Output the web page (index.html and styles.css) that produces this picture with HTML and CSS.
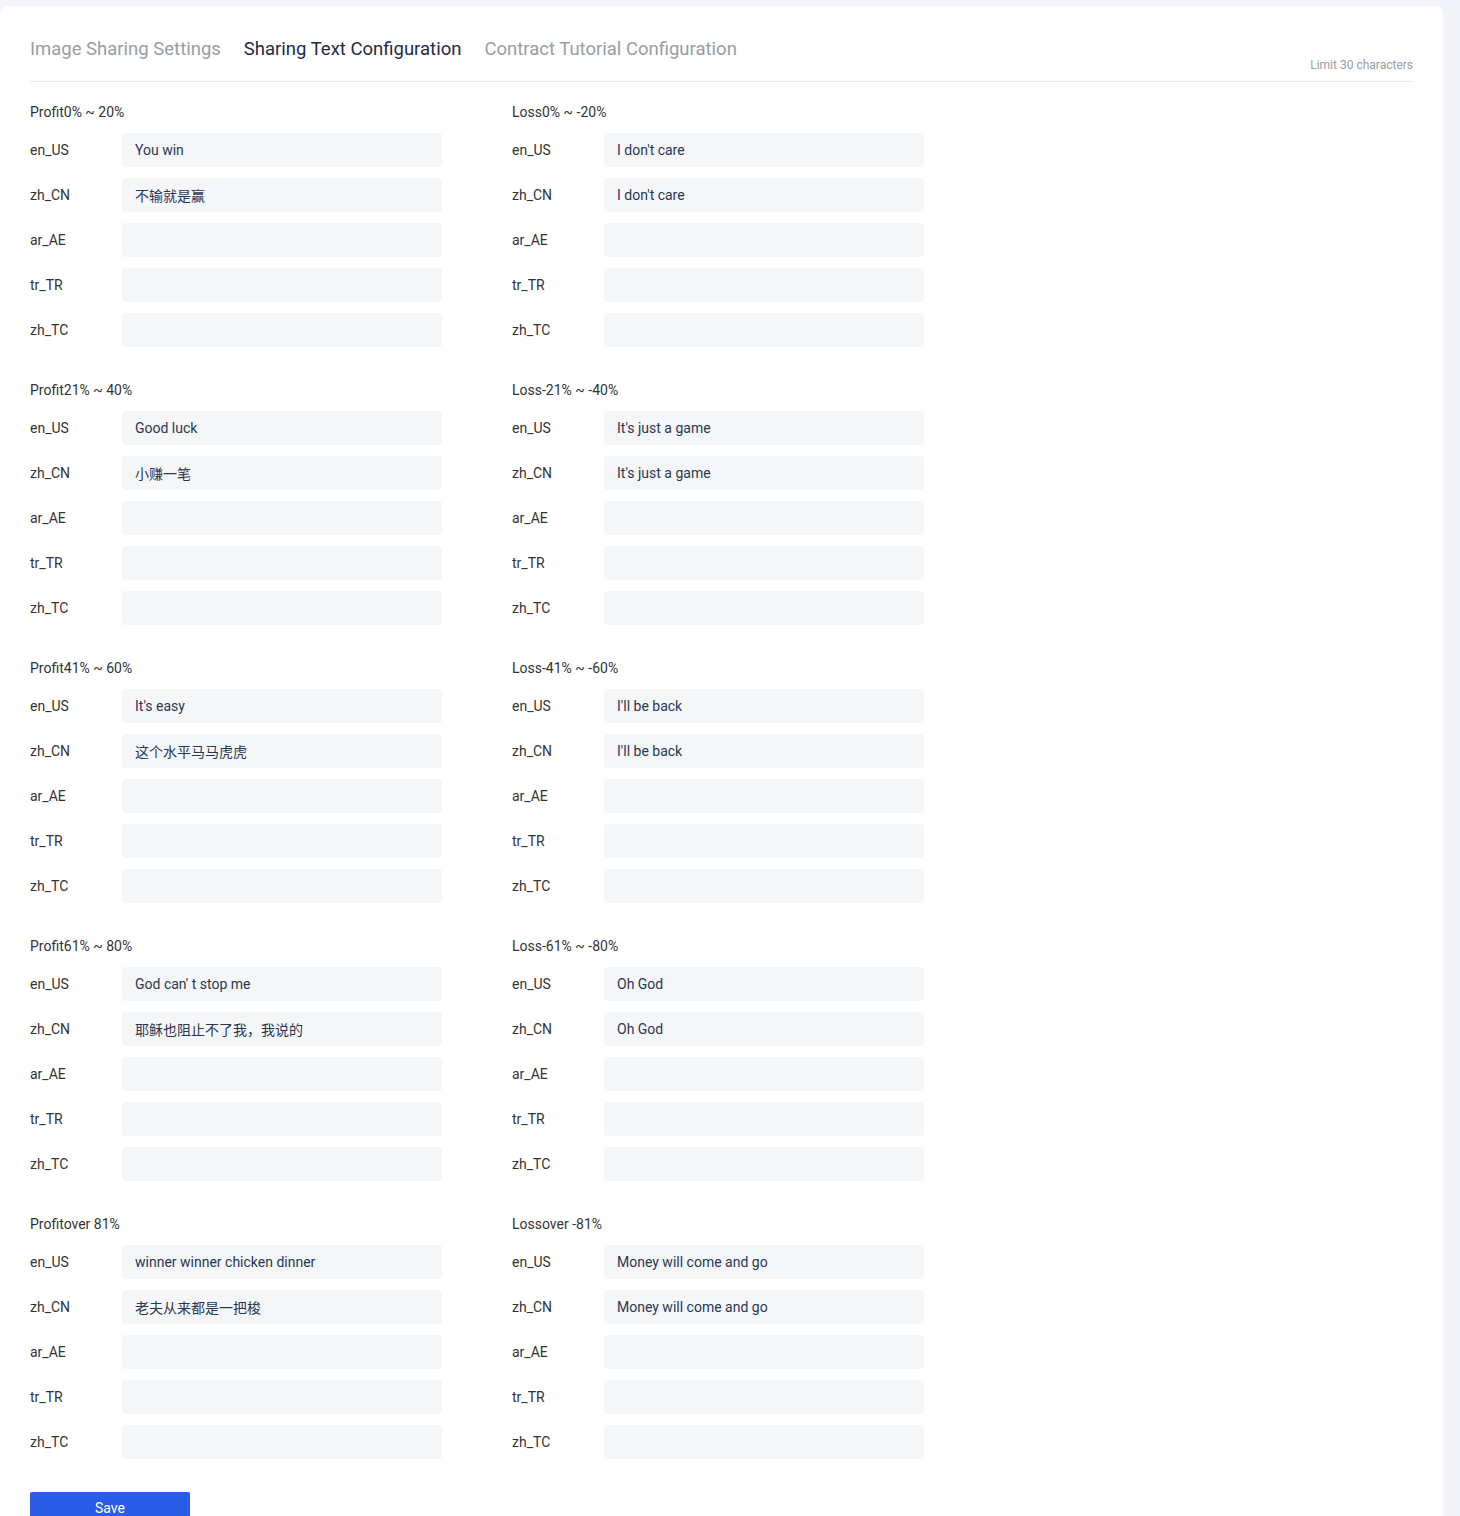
FILE: index.html
```html
<!DOCTYPE html>
<html lang="en">
<head>
<meta charset="utf-8">
<title>Sharing Text Configuration</title>
<link rel="stylesheet" href="styles.css">
</head>
<body>
<div class="card">
  <div class="tabbar">
    <div class="tabs">
      <span class="tab">Image Sharing Settings</span>
      <span class="tab active">Sharing Text Configuration</span>
      <span class="tab">Contract Tutorial Configuration</span>
    </div>
    <span class="limit">Limit 30 characters</span>
  </div>
  <div class="grid" id="grid"></div>
  <button class="save">Save</button>
</div>
<script src="app.js"></script>
</body>
</html>
```
FILE: app.js
```js
var data = [
  ["Profit0% ~ 20%", ["You win", "不输就是赢"], "Loss0% ~ -20%", ["I don't care", "I don't care"]],
  ["Profit21% ~ 40%", ["Good luck", "小赚一笔"], "Loss-21% ~ -40%", ["It's just a game", "It's just a game"]],
  ["Profit41% ~ 60%", ["It's easy", "这个水平马马虎虎"], "Loss-41% ~ -60%", ["I'll be back", "I'll be back"]],
  ["Profit61% ~ 80%", ["God can' t stop me", "耶稣也阻止不了我，我说的"], "Loss-61% ~ -80%", ["Oh God", "Oh God"]],
  ["Profitover 81%", ["winner winner chicken dinner", "老夫从来都是一把梭"], "Lossover -81%", ["Money will come and go", "Money will come and go"]]
];
var langs = ["en_US", "zh_CN", "ar_AE", "tr_TR", "zh_TC"];
var grid = document.getElementById("grid");
function section(title, vals) {
  var s = document.createElement("div");
  s.className = "section";
  var h = document.createElement("div");
  h.className = "sec-title";
  h.textContent = title;
  s.appendChild(h);
  langs.forEach(function (l, i) {
    var r = document.createElement("div");
    r.className = "row";
    var lab = document.createElement("label");
    lab.className = "lang";
    lab.textContent = l;
    var inp = document.createElement("input");
    inp.className = "field";
    inp.type = "text";
    inp.value = vals[i] || "";
    r.appendChild(lab);
    r.appendChild(inp);
    s.appendChild(r);
  });
  return s;
}
data.forEach(function (d) {
  grid.appendChild(section(d[0], d[1]));
  grid.appendChild(section(d[2], d[3]));
});
```
FILE: styles.css
```css
* { box-sizing: border-box; }
html, body { margin: 0; padding: 0; }
body {
  background: #f3f5fa;
  font-family: Roboto, "Noto Sans CJK SC", sans-serif;
  color: #333;
}
.card {
  margin-top: 6px;
  width: 1443px;
  min-height: 1600px;
  background: #fff;
  border-radius: 8px;
  padding: 31px 30px 0 30px;
}
.tabbar {
  display: flex;
  justify-content: space-between;
  align-items: flex-end;
  border-bottom: 1px solid #e8e9ec;
  width: 1383px;
}
.tabs {
  display: flex;
  gap: 23px;
  padding-bottom: 20px;
}
.tab {
  font-size: 18.5px;
  line-height: 24px;
  color: #9a9da4;
}
.tab.active { color: #1f2b47; }
.limit {
  font-size: 12px;
  line-height: 17px;
  color: #9a9da4;
  padding-bottom: 7px;
}
.grid {
  display: grid;
  grid-template-columns: 412px 412px;
  column-gap: 70px;
  row-gap: 33px;
  padding-top: 20px;
}
.sec-title {
  font-size: 14px;
  line-height: 20px;
  color: #333;
  margin-bottom: 11px;
}
.row {
  display: flex;
  align-items: center;
  margin-bottom: 11px;
}
.row:last-child { margin-bottom: 0; }
.lang {
  width: 92px;
  font-size: 14px;
  color: #333;
}
.field {
  width: 320px;
  height: 34px;
  border: none;
  outline: none;
  background: #f5f6f8;
  border-radius: 4px;
  padding: 0 13px 1px 13px;
  font-family: Roboto, "Noto Sans CJK SC", sans-serif;
  font-size: 14px;
  color: #2a3652;
}
.save {
  display: block;
  margin-top: 33px;
  width: 160px;
  height: 32px;
  border: none;
  border-radius: 2px;
  background: #2a5ce6;
  color: #fff;
  font-family: Roboto, sans-serif;
  font-size: 14px;
  padding: 0;
}
```
